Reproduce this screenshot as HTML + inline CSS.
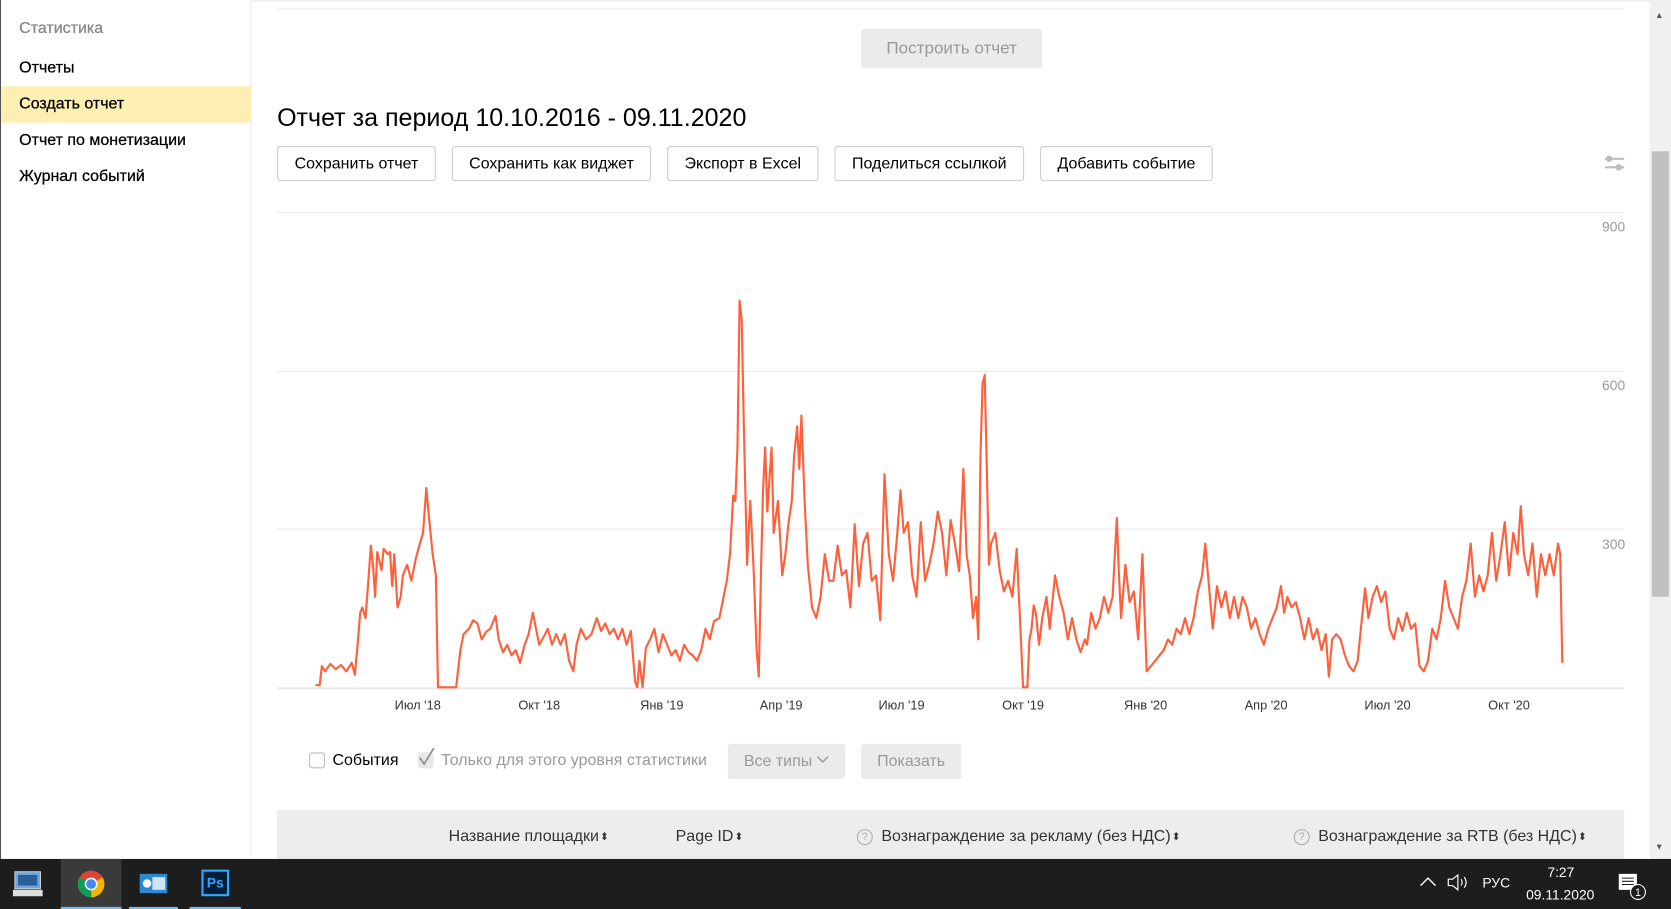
<!DOCTYPE html>
<html><head><meta charset="utf-8">
<style>
*{margin:0;padding:0;box-sizing:border-box}
html,body{width:1671px;height:909px;overflow:hidden;background:#fff;font-family:"Liberation Sans",Arial,sans-serif}
#w{position:absolute;left:0;top:0;width:1568px;height:853px;transform:scale(1.06569);transform-origin:0 0}
.a{position:absolute;white-space:nowrap}
.side{left:0;top:0;width:236px;height:806px;border-right:1px solid #ececec;border-left:1px solid #555;background:#fff}
.si{position:absolute;left:17px;font-size:15px;color:#000;-webkit-text-stroke:0.25px #000}
.btn{position:absolute;top:137px;height:33px;border:1px solid #ccc;border-radius:3px;background:#fff;font-size:15px;color:#000;text-align:center;line-height:31px}
.grid{position:absolute;left:260px;width:1264px;height:1px;background:#e8e8e8}
.yl{position:absolute;right:43px;font-size:13px;color:#999}
.xl{position:absolute;top:655px;font-size:12px;color:#333;transform:translateX(-50%)}
.th{position:absolute;top:776px;font-size:15px;color:#333}
.s{font-size:10px;vertical-align:1px;margin-left:1px}
.q{display:inline-block;width:15px;height:15px;border:1px solid #aaa;border-radius:50%;font-size:10px;line-height:13px;text-align:center;color:#aaa;vertical-align:1px;margin-right:8px}
</style></head><body><div id="w">
<div class="a side">
<div class="si" style="top:18px;color:#888;-webkit-text-stroke:0.25px #888">Статистика</div>
<div class="si" style="top:55px">Отчеты</div>
<div style="position:absolute;left:0;top:81px;width:235px;height:34px;background:#fdefb2"></div>
<div class="si" style="top:89px">Создать отчет</div>
<div class="si" style="top:123px">Отчет по монетизации</div>
<div class="si" style="top:157px">Журнал событий</div>
</div>
<div class="a" style="left:237px;top:0;width:1311px;height:2px;background:#f0f0f0"></div>
<div class="a" style="left:260px;top:8px;width:1264px;height:1px;background:#ececec"></div>
<div class="a" style="left:808px;top:27px;width:170px;height:37px;background:#ebebeb;border-radius:3px;color:#999;font-size:16px;text-align:center;line-height:37px">Построить отчет</div>
<div class="a" style="left:260px;top:97px;font-size:23.5px;color:#000">Отчет за период 10.10.2016 - 09.11.2020</div>
<div class="btn" style="left:260px;width:149px">Сохранить отчет</div>
<div class="btn" style="left:424px;width:187px">Сохранить как виджет</div>
<div class="btn" style="left:626px;width:142px">Экспорт в Excel</div>
<div class="btn" style="left:783px;width:178px">Поделиться ссылкой</div>
<div class="btn" style="left:976px;width:162px">Добавить событие</div>
<svg class="a" style="left:1504px;top:145px" width="22" height="18"><g stroke="#bbb" stroke-width="2"><line x1="2" y1="4" x2="20" y2="4"/><line x1="2" y1="12" x2="20" y2="12"/></g><circle cx="6" cy="4" r="3" fill="#bbb"/><circle cx="15" cy="12" r="3" fill="#bbb"/></svg>
<div class="grid" style="top:199px"></div>
<div class="grid" style="top:348px"></div>
<div class="grid" style="top:496px"></div>
<div class="grid" style="top:645px;height:2px"></div>
<div class="yl" style="top:205px">900</div>
<div class="yl" style="top:354px">600</div>
<div class="yl" style="top:503px">300</div>
<div class="xl" style="left:392px">Июл '18</div><div class="xl" style="left:506px">Окт '18</div><div class="xl" style="left:621px">Янв '19</div><div class="xl" style="left:733px">Апр '19</div><div class="xl" style="left:846px">Июл '19</div><div class="xl" style="left:960px">Окт '19</div><div class="xl" style="left:1075px">Янв '20</div><div class="xl" style="left:1188px">Апр '20</div><div class="xl" style="left:1302px">Июл '20</div><div class="xl" style="left:1416px">Окт '20</div>
<svg class="a" style="left:0;top:0" width="1568" height="853"><polyline fill="none" stroke="#ff5f3a" stroke-width="2" stroke-linejoin="round" points="296,643 300,643 302,625 305,630 310,623 315,628 320,624 325,630 330,622 333,633 336,600 338,575 340,570 343,580 346,540 348,512 350,530 352,560 354,518 358,535 360,515 364,520 366,518 368,550 370,520 373,570 376,560 378,540 382,530 386,545 390,525 394,510 397,500 400,458 403,490 406,520 409,540 411,645 428,645 432,610 435,595 440,590 444,582 448,585 452,600 456,593 460,590 465,578 468,600 472,612 476,605 480,615 484,610 488,622 492,606 496,595 500,575 503,590 506,605 510,598 514,590 518,605 522,595 526,605 530,595 534,620 538,630 541,605 545,590 550,600 555,595 560,580 564,592 568,585 572,595 576,590 580,600 584,590 588,605 592,592 596,640 598,645 600,620 603,645 606,608 610,600 614,590 618,612 622,595 626,605 630,615 634,610 638,620 642,605 646,612 650,615 654,620 658,610 662,590 666,600 670,583 675,580 678,565 682,545 685,520 688,465 690,470 692,420 694,282 696,300 698,400 701,530 704,470 707,530 710,610 712,635 714,540 716,460 718,420 720,480 722,450 724,420 726,500 730,470 734,540 737,520 740,490 743,470 745,430 748,400 750,440 752,390 755,470 758,530 762,570 766,580 770,560 774,520 778,545 782,545 786,512 790,540 794,535 798,570 802,492 806,550 810,510 814,500 818,545 822,540 826,582 830,445 834,520 838,545 842,500 845,460 848,500 852,490 856,540 860,560 864,490 868,545 872,530 876,510 880,480 884,500 888,540 892,488 896,510 900,536 904,440 907,520 910,540 913,580 916,560 918,600 920,430 922,360 924,352 926,440 928,530 930,510 934,500 938,535 942,555 946,545 950,560 954,515 958,600 960,645 964,645 966,600 968,590 970,568 972,575 975,605 978,580 982,560 985,590 988,560 990,540 994,560 998,575 1002,600 1006,580 1010,600 1014,612 1018,600 1020,605 1024,575 1028,590 1032,580 1036,560 1040,575 1044,560 1048,486 1050,540 1052,580 1056,530 1060,565 1064,555 1068,600 1072,520 1076,630 1080,625 1084,620 1088,615 1092,610 1096,600 1100,605 1104,590 1108,595 1112,580 1116,595 1120,580 1124,555 1128,540 1131,510 1134,545 1138,590 1142,550 1146,570 1150,555 1154,580 1158,560 1162,580 1166,560 1170,570 1174,590 1178,580 1182,595 1186,605 1190,590 1194,580 1198,570 1202,550 1205,575 1208,560 1212,570 1216,565 1220,580 1224,600 1228,580 1232,600 1236,590 1240,610 1244,595 1247,635 1250,600 1254,595 1258,600 1262,615 1266,625 1270,630 1274,620 1278,580 1281,552 1284,580 1288,560 1292,550 1296,565 1300,555 1304,590 1308,600 1312,580 1316,592 1320,575 1324,590 1328,585 1332,625 1336,630 1340,620 1344,590 1348,600 1352,580 1356,545 1360,570 1364,580 1368,590 1372,560 1376,545 1380,510 1384,560 1388,540 1392,555 1396,540 1400,500 1404,545 1408,520 1412,490 1416,540 1420,500 1424,520 1427,475 1430,520 1434,540 1438,510 1442,560 1446,520 1450,540 1454,520 1458,540 1462,510 1464,520 1466,622"/></svg>
<div class="a" style="left:290px;top:706px;width:15px;height:15px;border:1px solid #bbb;border-radius:3px"></div>
<div class="a" style="left:312px;top:705px;font-size:15px;color:#000">События</div>
<div class="a" style="left:392px;top:706px;width:15px;height:15px;background:#e8e8e8;border-radius:3px"></div>
<svg class="a" style="left:392px;top:700px" width="18" height="20"><path d="M2 11l4 6L15 2" fill="none" stroke="#888" stroke-width="1.5"/></svg>
<div class="a" style="left:414px;top:705px;font-size:15px;color:#999">Только для этого уровня статистики</div>
<div class="a" style="left:683px;top:698px;width:110px;height:33px;background:#ebebeb;border-radius:3px;color:#999;font-size:15px;line-height:33px;padding-left:15px">Все типы <svg width="12" height="8" style="vertical-align:2px"><path d="M1 1l5 5 5-5" fill="none" stroke="#999" stroke-width="1.3"/></svg></div>
<div class="a" style="left:808px;top:698px;width:94px;height:33px;background:#ebebeb;border-radius:3px;color:#999;font-size:15px;line-height:33px;text-align:center">Показать</div>
<div class="a" style="left:260px;top:760px;width:1264px;height:46px;background:#ededed"></div>
<div class="th" style="left:421px">Название площадки<span class="s">⬍</span></div>
<div class="th" style="left:634px">Page ID<span class="s">⬍</span></div>
<div class="th" style="left:804px"><span class="q">?</span>Вознаграждение за рекламу (без НДС)<span class="s">⬍</span></div>
<div class="th" style="left:1214px"><span class="q">?</span>Вознаграждение за RTB (без НДС)<span class="s">⬍</span></div>
<div class="a" style="left:1548px;top:0;width:20px;height:806px;background:#f0f0f0"></div>
<div class="a" style="left:1550px;top:142px;width:16px;height:418px;background:#c1c1c1"></div>
<div class="a" style="left:1553px;top:10px;font-size:8px;color:#555">▲</div>
<div class="a" style="left:1553px;top:790px;font-size:8px;color:#555">▼</div>
<div class="a" style="left:0;top:806px;width:1568px;height:47px;background:#1d1d1d"></div>
<svg class="a" style="left:12px;top:815px" width="30" height="28"><rect x="2" y="3" width="24" height="16" fill="#6fa7d8" stroke="#ccc"/><rect x="5" y="6" width="18" height="10" fill="#2c5e9c"/><rect x="0" y="20" width="28" height="6" fill="#ddd"/></svg>
<div class="a" style="left:57px;top:806px;width:57px;height:47px;background:#3a3a3a;border-bottom:2px solid #76b9ed"></div>
<svg class="a" style="left:72px;top:816px" width="27" height="27" viewBox="0 0 27 27"><circle cx="13.5" cy="13.5" r="12.5" fill="#db4437"/><path d="M13.5 13.5L2.7 7.3A12.5 12.5 0 0 0 13.5 26Z" fill="#0f9d58"/><path d="M13.5 13.5L13.5 26A12.5 12.5 0 0 0 24.3 7.3Z" fill="#f4b400"/><circle cx="13.5" cy="13.5" r="6" fill="#fff"/><circle cx="13.5" cy="13.5" r="4.6" fill="#4285f4"/></svg>
<div class="a" style="left:121px;top:851px;width:46px;height:2px;background:#76b9ed"></div>
<svg class="a" style="left:131px;top:818px" width="26" height="22"><rect x="0" y="2" width="26" height="18" fill="#2a8ad4"/><rect x="12" y="5" width="12" height="12" fill="#cfe6f8"/><circle cx="7" cy="11" r="4" fill="#fff"/></svg>
<div class="a" style="left:178px;top:851px;width:48px;height:2px;background:#76b9ed"></div>
<div class="a" style="left:189px;top:816px;width:26px;height:25px;background:#001e36;border:2px solid #31a8ff;color:#31a8ff;font-size:13px;font-weight:bold;text-align:center;line-height:21px">Ps</div>
<svg class="a" style="left:1332px;top:822px" width="16" height="10"><path d="M1 9l7-7 7 7" fill="none" stroke="#fff" stroke-width="1.3"/></svg>
<svg class="a" style="left:1358px;top:820px" width="22" height="16"><path d="M1 5h4l5-4v14l-5-4H1z" fill="none" stroke="#fff" stroke-width="1.1"/><path d="M13 5q2 3 0 6M16 3q3.5 5 0 10" fill="none" stroke="#fff" stroke-width="1.1"/></svg>
<div class="a" style="left:1391px;top:821px;font-size:13px;color:#fff">РУС</div>
<div class="a" style="left:1452px;top:811px;font-size:13px;color:#fff">7:27</div>
<div class="a" style="left:1432px;top:832px;font-size:13px;color:#fff">09.11.2020</div>
<svg class="a" style="left:1518px;top:818px" width="28" height="28"><rect x="1" y="2" width="17" height="15" fill="#fff"/><g stroke="#1d1d1d"><line x1="4" y1="6" x2="15" y2="6"/><line x1="4" y1="9" x2="15" y2="9"/><line x1="4" y1="12" x2="15" y2="12"/></g><circle cx="19" cy="19" r="7" fill="#1d1d1d" stroke="#fff"/><text x="19" y="23" font-size="10" fill="#fff" text-anchor="middle" font-family="Liberation Sans">1</text></svg>
</div></body></html>
